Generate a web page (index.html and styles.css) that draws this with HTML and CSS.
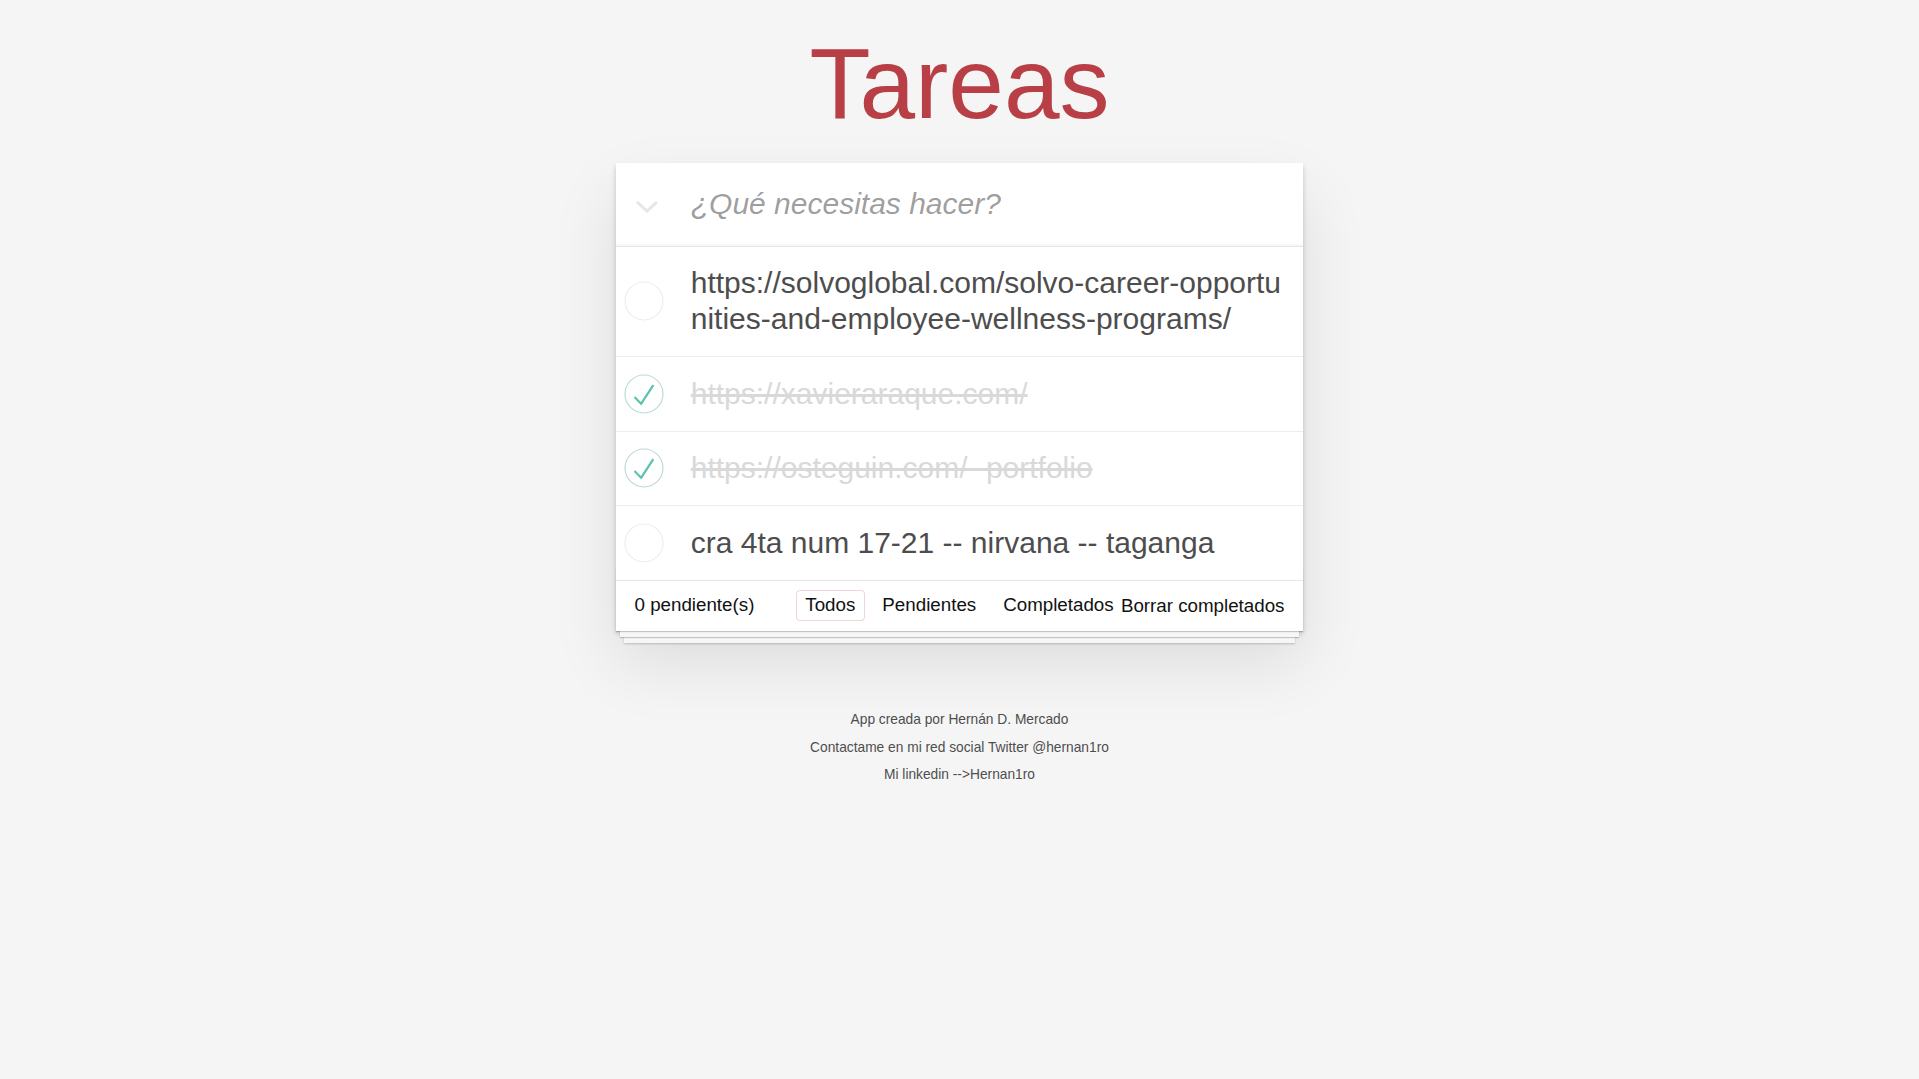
FILE: index.html
```html
<!DOCTYPE html>
<html lang="es">
<head>
<meta charset="utf-8">
<title>Tareas</title>
<link rel="stylesheet" href="styles.css">
</head>
<body>
<div class="page">
  <h1 class="title">Tareas</h1>
  <section class="todoapp">
    <header class="header">
      <span class="toggle-all">
        <svg width="24" height="14" viewBox="0 0 24 14"><polyline points="2,2 12,11 22,2" fill="none" stroke="#e6e6e6" stroke-width="3"/></svg>
      </span>
      <input class="new-todo" placeholder="¿Qué necesitas hacer?">
    </header>
    <ul class="todo-list">
      <li class="todo">
        <span class="toggle"><svg width="40" height="40" viewBox="0 0 40 40"><g transform="translate(1 1) scale(0.38)"><circle cx="50" cy="50" r="50" fill="none" stroke="#ededed" stroke-width="3"/></g></svg></span>
        <label class="todo-label">https://solvoglobal.com/solvo-career-opportunities-and-employee-wellness-programs/</label>
      </li>
      <li class="todo completed">
        <span class="toggle"><svg width="40" height="40" viewBox="0 0 40 40"><g transform="translate(1 1) scale(0.38)"><circle cx="50" cy="50" r="50" fill="none" stroke="#bddad5" stroke-width="3"/><path fill="#5dc2af" d="M72 25L42 71 27 56l-4 4 20 20 34-52z"/></g></svg></span>
        <label class="todo-label">https://xavieraraque.com/</label>
      </li>
      <li class="todo completed">
        <span class="toggle"><svg width="40" height="40" viewBox="0 0 40 40"><g transform="translate(1 1) scale(0.38)"><circle cx="50" cy="50" r="50" fill="none" stroke="#bddad5" stroke-width="3"/><path fill="#5dc2af" d="M72 25L42 71 27 56l-4 4 20 20 34-52z"/></g></svg></span>
        <label class="todo-label">https://osteguin.com/ -portfolio</label>
      </li>
      <li class="todo">
        <span class="toggle"><svg width="40" height="40" viewBox="0 0 40 40"><g transform="translate(1 1) scale(0.38)"><circle cx="50" cy="50" r="50" fill="none" stroke="#ededed" stroke-width="3"/></g></svg></span>
        <label class="todo-label">cra 4ta num 17-21 -- nirvana -- taganga</label>
      </li>
    </ul>
    <footer class="footer">
      <span class="todo-count">0 pendiente(s)</span>
      <ul class="filters">
        <li><a class="filter selected" href="#/">Todos</a></li>
        <li><a class="filter" href="#/active">Pendientes</a></li>
        <li><a class="filter" href="#/completed">Completados</a></li>
      </ul>
      <button class="clear-completed">Borrar completados</button>
    </footer>
  </section>
  <footer class="info">
    <p>App creada por Hernán D. Mercado</p>
    <p>Contactame en mi red social Twitter @hernan1ro</p>
    <p>Mi linkedin --&gt;<a href="#">Hernan1ro</a></p>
  </footer>
</div>
</body>
</html>
```

FILE: styles.css
```css
html, body {
  margin: 0;
  padding: 0;
}

body {
  background: #f5f5f5;
  font-family: "Liberation Sans", Arial, sans-serif;
  font-size: 17.5px;
  line-height: 24.5px;
  color: #4d4d4d;
}

.page {
  width: 687.5px;
  margin: 0 auto;
}

.title {
  margin: 0 0 30px 0;
  padding-top: 33px;
  font-size: 100px;
  line-height: 100px;
  font-weight: normal;
  color: #b83f45;
  text-align: center;
}

.todoapp {
  position: relative;
  background: #fff;
  box-shadow: 0 2.5px 5px 0 rgba(0, 0, 0, 0.2), 0 31px 62px 0 rgba(0, 0, 0, 0.1);
}

.header {
  display: flex;
  align-items: center;
  height: 82.5px;
  box-shadow: inset 0 -2px 1px rgba(0, 0, 0, 0.03);
}

.toggle-all {
  flex: none;
  width: 75px;
  display: flex;
  padding-left: 19px;
  box-sizing: border-box;
  margin-top: 5px;
}

.new-todo {
  flex: 1;
  min-width: 0;
  height: 82.5px;
  box-sizing: border-box;
  border: none;
  outline: none;
  padding: 0 20px 0 0;
  background: transparent;
  font-family: "Liberation Sans", Arial, sans-serif;
  font-size: 30px;
  color: #4d4d4d;
}

.new-todo::placeholder {
  font-style: italic;
  color: rgba(0, 0, 0, 0.4);
}

.todo-list {
  list-style: none;
  margin: 0;
  padding: 0;
  border-top: 1px solid #e6e6e6;
}

.todo {
  display: flex;
  align-items: center;
  border-bottom: 1px solid #ededed;
}

.todo:last-child {
  border-bottom: none;
}

.toggle {
  flex: none;
  width: 75px;
  display: flex;
  align-items: center;
  padding-left: 8px;
  box-sizing: border-box;
}

.todo-label {
  flex: 1;
  min-width: 0;
  padding: 18.75px 18.75px 18.75px 0;
  font-size: 30px;
  line-height: 36px;
  word-break: break-all;
  color: #4d4d4d;
}

.completed .todo-label {
  color: #d9d9d9;
  text-decoration: line-through;
}

.footer {
  position: relative;
  display: grid;
  grid-template-columns: minmax(0, 1fr) auto minmax(0, 1fr);
  align-items: center;
  height: 51.5px;
  box-sizing: border-box;
  padding: 0 18.75px 1px;
  border-top: 1px solid #e6e6e6;
  color: #111;
  font-size: 18.75px;
}

.footer::before {
  content: "";
  position: absolute;
  right: 0;
  bottom: 0;
  left: 0;
  height: 62px;
  overflow: hidden;
  pointer-events: none;
  box-shadow: 0 1px 1px rgba(0, 0, 0, 0.2),
    0 10px 0 -4px #f6f6f6,
    0 11px 1px -4px rgba(0, 0, 0, 0.2),
    0 20px 0 -8px #f6f6f6,
    0 21px 2px -8px rgba(0, 0, 0, 0.2);
}

.todo-count {
  justify-self: start;
  white-space: nowrap;
}

.filters {
  list-style: none;
  margin: 0;
  padding: 0;
  display: flex;
}

.filter {
  display: block;
  margin: 3.75px;
  padding: 2px 8.75px;
  border: 1.25px solid transparent;
  border-radius: 3.75px;
  color: inherit;
  text-decoration: none;
}

.filter.selected {
  border-color: rgba(175, 47, 47, 0.2);
}

.clear-completed {
  justify-self: end;
  white-space: nowrap;
  border: none;
  background: none;
  padding: 0;
  margin: 2px 0 0 0;
  font-family: "Liberation Sans", Arial, sans-serif;
  font-size: 18.75px;
  line-height: 24.5px;
  color: #111;
}

.info {
  margin-top: 82px;
  color: #4d4d4d;
  font-size: 13.75px;
  text-align: center;
  text-shadow: 0 1px 0 rgba(255, 255, 255, 0.5);
}

.info p {
  margin: 13.75px 0;
  line-height: 1;
}

.info a {
  color: inherit;
  text-decoration: none;
}
```
